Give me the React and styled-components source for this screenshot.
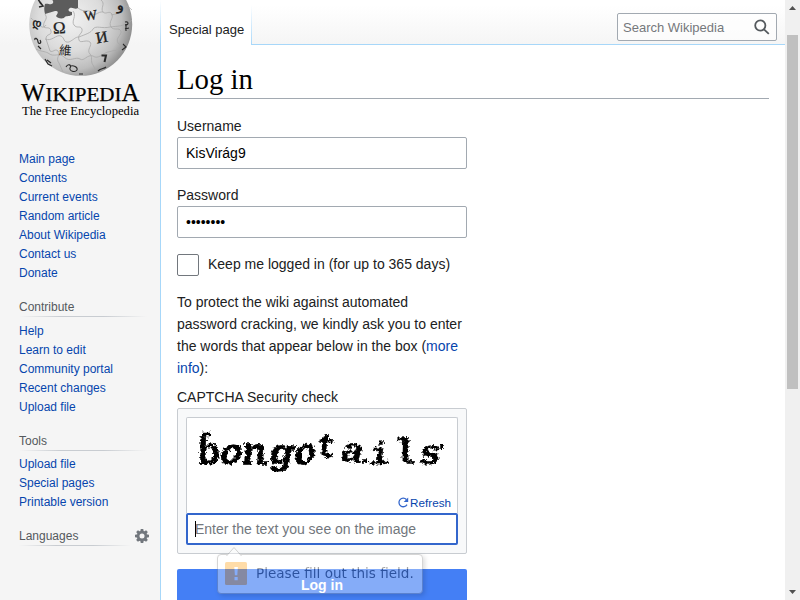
import React from "react";
import styled, { createGlobalStyle } from "styled-components";

const GlobalStyle = createGlobalStyle`
  * { box-sizing: border-box; }
  body {
    margin: 0;
    overflow: hidden;
    background: #f5f5f5;
    font-family: "Liberation Sans", Arial, sans-serif;
    font-size: 14px;
    color: #202122;
  }
`;

const Page = styled.div`
  display: flex;
  width: 800px;
  height: 600px;
  overflow: hidden;
  background: linear-gradient(#fff 0, #fff 5px, #f5f5f5 45px);
`;

const Sidebar = styled.aside`
  width: 160px;
  height: 600px;
  flex: none;
`;

const Logo = styled.svg`
  display: block;
  width: 160px;
  height: 124px;
`;

const Nav = styled.nav`
  padding: 0 11px 0 19px;
  margin-top: ${(p) => p.$top}px;
  font-size: 12px;
`;

const NavHeading = styled.h3`
  position: relative;
  display: flex;
  align-items: center;
  justify-content: space-between;
  height: 20px;
  margin: 0 0 ${(p) => p.$gap}px;
  padding-bottom: 1px;
  font-size: 12px;
  font-weight: 400;
  color: #54595d;
  background: linear-gradient(to right, rgba(200, 204, 209, 0) 0, #c8ccd1 33%, #c8ccd1 66%, rgba(200, 204, 209, 0) 100%)
    no-repeat 0 100% / ${(p) => p.$rule}px 1px;
`;

const NavLink = styled.a`
  display: block;
  height: 19px;
  line-height: 19px;
  color: #0645ad;
  white-space: nowrap;
`;

const Main = styled.div`
  display: flex;
  flex-direction: column;
  width: 625px;
  flex: none;
`;

const Header = styled.header`
  display: flex;
  height: 45px;
  flex: none;
`;

const Tab = styled.div`
  width: 92px;
  height: 45px;
  padding: 20px 0 0 9px;
  font-size: 13px;
  line-height: 20px;
  white-space: nowrap;
  background:
    linear-gradient(#fff, #a7d7f9) no-repeat 0 0 / 1px 100%,
    linear-gradient(#fff 5px, #a7d7f9) no-repeat 100% 0 / 1px 100%,
    #fff;
`;

const HeaderRest = styled.div`
  display: flex;
  flex: 1;
  justify-content: flex-end;
  padding: 13px 8px 0 0;
  border-bottom: 1px solid #a7d7f9;
`;

const Search = styled.div`
  display: flex;
  align-items: center;
  justify-content: space-between;
  width: 160px;
  height: 28px;
  padding: 0 6px 0 5px;
  border: 1px solid #a2a9b1;
  border-radius: 2px;
  background: rgba(255, 255, 255, 0.6);
  color: #75787c;
  font-size: 13px;
`;

const Content = styled.main`
  flex: 1;
  padding: 16px 16px 0;
  border-left: 1px solid #a7d7f9;
  background: #fff;
`;

const Title = styled.h1`
  height: 38px;
  margin: 0 0 17px;
  border-bottom: 1px solid #a2a9b1;
  font: 400 28.8px/37px "Liberation Serif", "Times New Roman", serif;
  color: #000;
`;

const Form = styled.form`
  width: 290px;
`;

const Label = styled.label`
  display: block;
  height: 21px;
  line-height: 21px;
`;

const TextInput = styled.input`
  display: block;
  width: 290px;
  height: 32px;
  margin: 0 0 16px;
  padding: 0 8px;
  border: 1px solid #a2a9b1;
  border-radius: 2px;
  outline: 0;
  background: #fff;
  color: #000;
  font: 14px "Liberation Sans", Arial, sans-serif;
`;

const CheckRow = styled.div`
  display: flex;
  align-items: center;
  gap: 9px;
  height: 22px;
  line-height: 21px;
  white-space: nowrap;
`;

const CheckText = styled.span`
  padding-bottom: 1px;
`;

const CheckBox = styled.span`
  width: 22px;
  height: 22px;
  border: 1px solid #72777d;
  border-radius: 2px;
`;

const Notice = styled.p`
  margin: 15px 0 8px;
  line-height: 22px;
  white-space: nowrap;
`;

const Link = styled.a`
  color: #0645ad;
`;

const CaptchaBox = styled.div`
  width: 290px;
  height: 146px;
  padding: 8px;
  border: 1px solid #c8ccd1;
  border-radius: 2px;
  background: #f8f9fa;
`;

const CaptchaPicture = styled.div`
  display: flex;
  flex-direction: column;
  height: 96px;
  border: 1px solid #c8ccd1;
  border-bottom: 0;
  border-radius: 2px 2px 0 0;
  background: #fff;
`;

const CaptchaSvg = styled.svg`
  display: block;
  width: 270px;
  height: 76px;
`;

const Refresh = styled.a`
  display: flex;
  align-items: center;
  justify-content: flex-end;
  gap: 1px;
  height: 17px;
  padding-right: 6px;
  font-size: 11.7px;
  color: #0645ad;
`;

const CaptchaField = styled.div`
  position: relative;
`;

const CaptchaInput = styled(TextInput)`
  width: 272px;
  margin: 0;
  padding: 0 7px;
  border: 2px solid #3366cc;
  &::placeholder { color: #72777d; opacity: 1; }
`;

const Caret = styled.span`
  position: absolute;
  left: 9px;
  top: 8px;
  width: 1px;
  height: 16px;
  background: #000;
`;

const Submit = styled.button`
  display: block;
  width: 290px;
  height: 32px;
  margin: 15px 0 0;
  padding: 0;
  border: 0;
  border-radius: 2px 2px 0 0;
  background: #447ff5;
  color: #fff;
  font: 700 14px/32px "Liberation Sans", Arial, sans-serif;
`;

const Bubble = styled.div`
  position: absolute;
  left: 31px;
  top: 41px;
  display: flex;
  align-items: center;
  gap: 9px;
  width: 206px;
  height: 40px;
  padding: 0 0 2px 7px;
  border: 1px solid #888;
  border-radius: 4px;
  background: #fff;
  box-shadow: 2px 2px 5px rgba(0, 0, 0, 0.4);
  color: #000;
  font: 13.55px "DejaVu Sans", sans-serif;
  white-space: nowrap;
  opacity: 0.35;
`;

const BubbleArrow = styled.svg`
  position: absolute;
  left: 7px;
  top: -9px;
  width: 18px;
  height: 10px;
`;

const ScrollTrack = styled.div`
  display: flex;
  flex-direction: column;
  align-items: center;
  width: 15px;
  height: 600px;
  background: #f0f0f0;
`;

const ScrollArrow = styled.svg`
  width: 15px;
  height: 16px;
  flex: none;
`;

const ScrollThumb = styled.div`
  width: 11px;
  height: 354px;
  margin: 19px 0 195px;
  flex: none;
  background: #c0c0c0;
`;

// glyph, centre x, baseline, rotation, size, horizontal stretch, slant
const letters = [
  ["b", 211, 464, 1, 38, 1, 0],
  ["o", 231, 464, 4, 36, 1.05, -14],
  ["n", 255, 464, 0, 37, 1.05, -8],
  ["g", 281, 464, -2, 35, 1.15, -12],
  ["o", 305, 464, -12, 36, 1.05, -12],
  ["t", 328, 457, 2, 34, 1, -4],
  ["a", 353, 462, 8, 35, 1.1, -10],
  ["i", 380, 464, -2, 31, 1.15, -8],
  ["l", 406, 464, -3, 37, 1.05, -4],
  ["s", 430, 464, -3, 35, 1.05, -12],
];

function WikiLogo() {
  return (
    <Logo viewBox="0 0 160 124">
      <defs>
        <radialGradient id="ball" cx="40%" cy="45%" r="62%">
          <stop offset="0" stopColor="#f2f2f2" />
          <stop offset=".5" stopColor="#dcdcdc" />
          <stop offset=".8" stopColor="#bdbdbd" />
          <stop offset="1" stopColor="#8a8a8a" />
        </radialGradient>
      </defs>
      <circle cx="80.7" cy="24.3" r="51.5" fill="url(#ball)" />
      <path
        d="M45 4C49 3 50 6 53 3C54 0 51 0 50 -2L78 -4L78 8C75 10 73 7 70 8C67 10 69 12 72 12L72 15C68 17 66 15 64 18C61 19 57 18 56 16C58 13 59 11 55 11L45 14C44 10 44 7 45 4Z"
        fill="#5c5c5c"
      />
      <g fill="none" stroke="#a8a8a8" strokeWidth=".8">
        <path d="M45 14C49 20 42 21 44 27C46 29 50 26 51 31C52 36 46 33 46 39L50 51C53 53 55 48 58 51C61 55 55 58 59 63L63 72" />
        <path d="M73 11C77 16 71 21 74 25C77 29 80 25 82 29C83 34 77 34 79 40C80 44 86 39 90 42C93 45 86 50 90 54C93 57 90 61 93 65L96 71" />
        <path d="M101 0C106 4 100 8 103 12C106 15 109 10 112 14C114 18 108 22 111 27C114 31 119 27 121 31C122 35 115 38 118 43C121 47 123 43 125 45" />
        <path d="M31 18C35 23 38 20 40 24C41 29 45 27 46 25M45 39C52 42 56 34 61 36C65 38 63 43 69 42C75 39 75 37 79 37C86 34 91 33 93 29C96 25 102 29 110 27C117 26 124 27 132 20" />
        <path d="M36 49C42 52 44 51 48 53C54 58 59 52 64 57C70 63 75 56 80 59C84 62 87 54 93 56C98 60 103 53 108 52C114 50 119 51 123 48" />
        <path d="M78 8C84 13 88 9 91 12C94 18 98 11 103 12M111 15C116 14 120 14 124 8C126 4 130 8 132 10" />
      </g>
      <g fill="#222" fontFamily="Liberation Serif, serif">
        <text x="53" y="33.5" fontSize="17" stroke="#222" strokeWidth=".3" transform="rotate(-3 59 28)">Ω</text>
        <text x="84" y="20" fontSize="14" textLength="13" lengthAdjust="spacingAndGlyphs" stroke="#222" strokeWidth=".3" transform="rotate(-8 90 15)">W</text>
        <text x="96" y="42.5" fontSize="16" textLength="12" lengthAdjust="spacingAndGlyphs" stroke="#222" strokeWidth=".3" transform="rotate(-10 102 38)">И</text>
        <text x="59" y="55" fontSize="12.5" fontFamily="Noto Sans CJK TC, sans-serif" transform="rotate(4 65 50)">維</text>
        <text x="117" y="10" fontSize="14" fontWeight="700">و</text>
        <text x="33" y="27" fontSize="11" fontWeight="700" transform="rotate(10 36 23)">დ</text>
      </g>
      <g fill="none" stroke="#2a2a2a" strokeWidth="1.5">
        <path d="M101.5 55.5H106L104.5 62" strokeWidth="2" />
        <path d="M39 7L43 6L40 2M41 4L38 -1" />
        <path d="M35 40C34 37 38 38 38 42C39 45 42 43 40 40M38 46L41 49" strokeWidth="1.2" />
        <path d="M125 22C129 21 129 25 125 25M125 29L129 28M126 24V31" strokeWidth="1.1" />
        <path d="M123 44L126 47L122 50" strokeWidth="1.1" />
        <path d="M45 59L48 64L52 66M47 60L51 63" strokeWidth="1.2" />
        <path d="M66 67C68 63 72 65 70 68C69 71 75 73 77 70C78 67 73 65 71 66" strokeWidth="1.1" />
        <path d="M98 71C101 68 104 69 106 67M79 74H83" strokeWidth="1.2" />
      </g>
      <g fill="#000" stroke="#000" strokeWidth=".25" fontFamily="Liberation Serif, serif">
        <text y="101">
          <tspan x="21" fontSize="26" textLength="24" lengthAdjust="spacingAndGlyphs">W</tspan>
          <tspan x="45.5" fontSize="19" textLength="76" lengthAdjust="spacingAndGlyphs">IKIPEDI</tspan>
          <tspan x="121.5" fontSize="26" textLength="18" lengthAdjust="spacingAndGlyphs">A</tspan>
        </text>
        <text x="22" y="115" fontSize="13.5" strokeWidth="0" textLength="117" lengthAdjust="spacingAndGlyphs">The Free Encyclopedia</text>
      </g>
    </Logo>
  );
}

function Gear() {
  return (
    <svg width="14" height="14" viewBox="0 0 20 20">
      <g transform="translate(10 10)" fill="#72777d">
        {[0, 45, 90, 135].map((a) => (
          <path key={a} d="M-1.8 -10H1.8L2.6 -6V6L1.8 10H-1.8L-2.6 6V-6Z" transform={`rotate(${a})`} />
        ))}
        <circle r="7.2" />
        <circle r="3.6" fill="#f5f5f5" />
      </g>
    </svg>
  );
}

function Section({ top, title, items, gear, gap = 5 }) {
  return (
    <Nav $top={top}>
      {title && (
        <NavHeading $rule={gear ? 112 : 128} $gap={gap}>
          {title}
          {gear && <Gear />}
        </NavHeading>
      )}
      {items.map((t) => (
        <NavLink key={t}>{t}</NavLink>
      ))}
    </Nav>
  );
}

function CaptchaWord() {
  return (
    <CaptchaSvg viewBox="187 418 270 76">
      <defs>
        <filter id="rough" x="-5%" y="-30%" width="110%" height="160%">
          <feTurbulence type="fractalNoise" baseFrequency=".4" numOctaves="2" seed="9" result="n" />
          <feDisplacementMap in="SourceGraphic" in2="n" scale="5.5" xChannelSelector="R" yChannelSelector="G" />
          <feGaussianBlur stdDeviation=".6" />
        </filter>
      </defs>
      <g
        filter="url(#rough)"
        fontFamily="Liberation Mono, monospace"
        fontWeight="700"
        fill="#000"
        stroke="#000"
        strokeWidth=".3"
        textAnchor="middle"
      >
        {letters.map(([c, x, y, r, s, w, k], i) => (
          <text
            key={i}
            fontSize={s}
            transform={`rotate(${r} ${x} ${y - 10}) translate(${x} ${y}) skewX(${k}) translate(-2 0) scale(${w} 1)`}
          >
            {c}
          </text>
        ))}
        <path
          d="M202 434.5H211M202 463H208M245 445H250M243 463H252M258 463H267M289 448H296M362 461H367M442 444V449"
          strokeWidth="3.5"
        />
      </g>
    </CaptchaSvg>
  );
}

export default function App() {
  return (
    <Page>
      <GlobalStyle />
      <Sidebar>
        <WikiLogo />
        <Section
          top={26}
          items={["Main page", "Contents", "Current events", "Random article", "About Wikipedia", "Contact us", "Donate"]}
        />
        <Section
          top={14}
          title="Contribute"
          items={["Help", "Learn to edit", "Community portal", "Recent changes", "Upload file"]}
        />
        <Section top={14} gap={4} title="Tools" items={["Upload file", "Special pages", "Printable version"]} />
        <Section top={14} title="Languages" items={[]} gear />
      </Sidebar>
      <Main>
        <Header>
          <Tab>Special page</Tab>
          <HeaderRest>
            <Search>
              Search Wikipedia
              <svg width="16" height="16" viewBox="0 0 16 16" fill="none" stroke="#54595d" strokeWidth="1.8">
                <circle cx="6.3" cy="6.5" r="5.1" />
                <path d="M10 10.3L14.8 14.8" />
              </svg>
            </Search>
          </HeaderRest>
        </Header>
        <Content>
          <Title>Log in</Title>
          <Form>
            <Label>Username</Label>
            <TextInput defaultValue="KisVirág9" />
            <Label>Password</Label>
            <TextInput type="password" defaultValue="password" />
            <CheckRow>
              <CheckBox />
              <CheckText>Keep me logged in (for up to 365 days)</CheckText>
            </CheckRow>
            <Notice>
              To protect the wiki against automated
              <br />
              password cracking, we kindly ask you to enter
              <br />
              the words that appear below in the box (<Link>more</Link>
              <br />
              <Link>info</Link>):
            </Notice>
            <Label>CAPTCHA Security check</Label>
            <CaptchaBox>
              <CaptchaPicture>
                <CaptchaWord />
                <Refresh>
                  <svg width="11" height="11" viewBox="0 0 11 11">
                    <path d="M9 7.6A4.3 4.3 0 1 1 8.4 2.5" fill="none" stroke="#3366cc" strokeWidth="1.3" />
                    <path d="M10.2 .5V5H5.7Z" fill="#3366cc" />
                  </svg>
                  Refresh
                </Refresh>
              </CaptchaPicture>
              <CaptchaField>
                <CaptchaInput placeholder="Enter the text you see on the image" />
                <Caret />
                <Bubble>
                  <BubbleArrow viewBox="0 0 18 10">
                    <path d="M1.5 10L9 1.5L16.5 10" fill="#fff" stroke="#888" />
                  </BubbleArrow>
                  <svg width="22" height="23" viewBox="0 0 22 23">
                    <rect width="22" height="23" rx="1.5" fill="#ff9d0a" />
                    <path d="M9.3 5H12.9L12.3 13.3H9.9ZM9.5 15H12.7V18.2H9.5Z" fill="#fff" />
                  </svg>
                  Please fill out this field.
                </Bubble>
              </CaptchaField>
            </CaptchaBox>
            <Submit type="button">Log in</Submit>
          </Form>
        </Content>
      </Main>
      <ScrollTrack>
        <ScrollArrow viewBox="0 0 15 16">
          <path d="M4 10H11L7.5 6Z" fill="#505050" />
        </ScrollArrow>
        <ScrollThumb />
        <ScrollArrow viewBox="0 0 15 16">
          <path d="M4 6H11L7.5 10Z" fill="#505050" />
        </ScrollArrow>
      </ScrollTrack>
    </Page>
  );
}
